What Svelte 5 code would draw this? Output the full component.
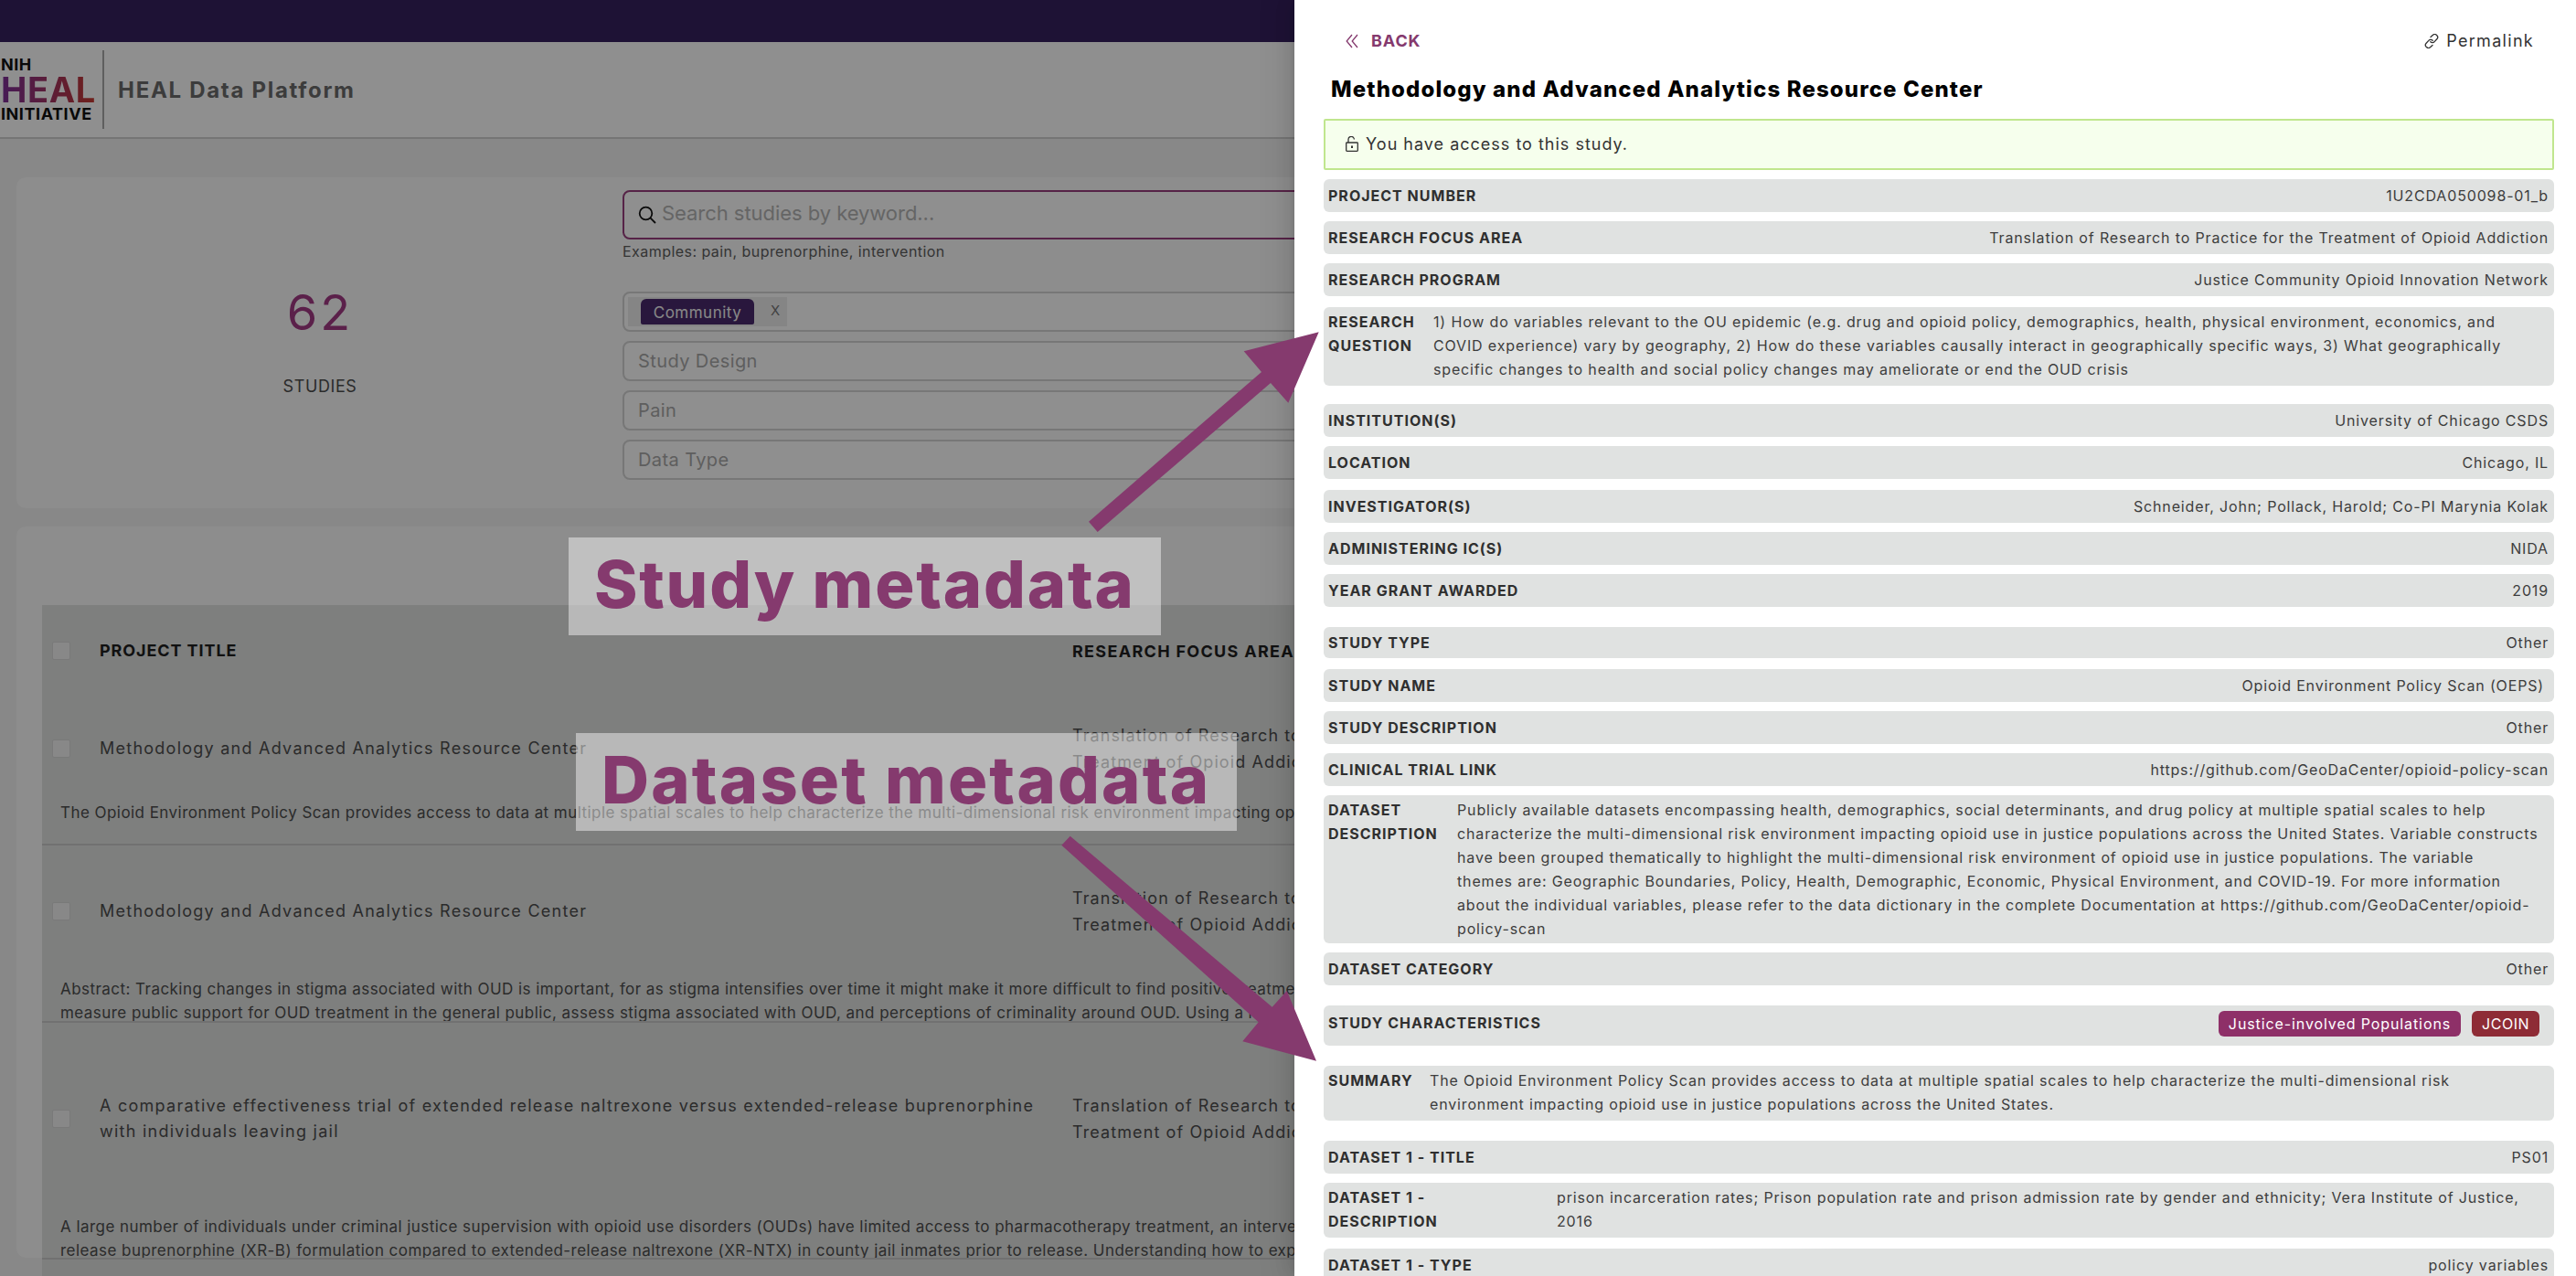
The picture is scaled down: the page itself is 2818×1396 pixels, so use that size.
<script>
  const rows = [
    { label: ['PROJECT NUMBER'], value: ['1U2CDA050098-01_b'], h: 36, gap: 10 },
    { label: ['RESEARCH FOCUS AREA'], value: ['Translation of Research to Practice for the Treatment of Opioid Addiction'], h: 36, gap: 10 },
    { label: ['RESEARCH PROGRAM'], value: ['Justice Community Opioid Innovation Network'], h: 36, gap: 10 },
    {
      label: ['RESEARCH', 'QUESTION'],
      value: [
        '1) How do variables relevant to the OU epidemic (e.g. drug and opioid policy, demographics, health, physical environment, economics, and',
        'COVID experience) vary by geography, 2) How do these variables causally interact in geographically specific ways, 3) What geographically',
        'specific changes to health and social policy changes may ameliorate or end the OUD crisis'
      ],
      h: 86, gap: 12, col: 115
    },
    { label: ['INSTITUTION(S)'], value: ['University of Chicago CSDS'], h: 36, gap: 20 },
    { label: ['LOCATION'], value: ['Chicago, IL'], h: 36, gap: 10 },
    { label: ['INVESTIGATOR(S)'], value: ['Schneider, John; Pollack, Harold; Co-PI Marynia Kolak'], h: 36, gap: 12 },
    { label: ['ADMINISTERING IC(S)'], value: ['NIDA'], h: 36, gap: 10 },
    { label: ['YEAR GRANT AWARDED'], value: ['2019'], h: 36, gap: 10 },
    { label: ['STUDY TYPE'], value: ['Other'], h: 34, gap: 22 },
    { label: ['STUDY NAME'], value: ['Opioid Environment Policy Scan (OEPS)'], h: 36, gap: 12, inset: 5 },
    { label: ['STUDY DESCRIPTION'], value: ['Other'], h: 36, gap: 10 },
    { label: ['CLINICAL TRIAL LINK'], value: ['https://github.com/GeoDaCenter/opioid-policy-scan'], h: 36, gap: 10 },
    {
      label: ['DATASET', 'DESCRIPTION'],
      value: [
        'Publicly available datasets encompassing health, demographics, social determinants, and drug policy at multiple spatial scales to help',
        'characterize the multi-dimensional risk environment impacting opioid use in justice populations across the United States. Variable constructs',
        'have been grouped thematically to highlight the multi-dimensional risk environment of opioid use in justice populations. The variable',
        'themes are: Geographic Boundaries, Policy, Health, Demographic, Economic, Physical Environment, and COVID-19. For more information',
        'about the individual variables, please refer to the data dictionary in the complete Documentation at https://github.com/GeoDaCenter/opioid-',
        'policy-scan'
      ],
      h: 162, gap: 10, col: 141
    },
    { label: ['DATASET CATEGORY'], value: ['Other'], h: 36, gap: 10 },
    { label: ['STUDY CHARACTERISTICS'], tags: true, h: 44, gap: 22 },
    {
      label: ['SUMMARY'],
      value: [
        'The Opioid Environment Policy Scan provides access to data at multiple spatial scales to help characterize the multi-dimensional risk',
        'environment impacting opioid use in justice populations across the United States.'
      ],
      h: 60, gap: 22, col: 111
    },
    { label: ['DATASET 1 - TITLE'], value: ['PS01'], h: 36, gap: 22 },
    {
      label: ['DATASET 1 -', 'DESCRIPTION'],
      value: ['prison incarceration rates; Prison population rate and prison admission rate by gender and ethnicity; Vera Institute of Justice,', '2016'],
      h: 60, gap: 10, col: 250
    },
    { label: ['DATASET 1 - TYPE'], value: ['policy variables'], h: 36, gap: 12 }
  ];

  const studies = [
    {
      title: ['Methodology and Advanced Analytics Resource Center'],
      focus: ['Translation of Research to Practice for the', 'Treatment of Opioid Addiction'],
      desc: ['The Opioid Environment Policy Scan provides access to data at multiple spatial scales to help characterize the multi-dimensional risk environment impacting opioid use in justice populations across the United States.'],
      main: 114, h: 163
    },
    {
      title: ['Methodology and Advanced Analytics Resource Center'],
      focus: ['Translation of Research to Practice for the', 'Treatment of Opioid Addiction'],
      desc: [
        'Abstract: Tracking changes in stigma associated with OUD is important, for as stigma intensifies over time it might make it more difficult to find positive treatment outcomes.',
        'measure public support for OUD treatment in the general public, assess stigma associated with OUD, and perceptions of criminality around OUD. Using a national survey'
      ],
      main: 144, h: 194
    },
    {
      title: ['A comparative effectiveness trial of extended release naltrexone versus extended-release buprenorphine', 'with individuals leaving jail'],
      focus: ['Translation of Research to Practice for the', 'Treatment of Opioid Addiction'],
      desc: [
        'A large number of individuals under criminal justice supervision with opioid use disorders (OUDs) have limited access to pharmacotherapy treatment, an intervention that',
        'release buprenorphine (XR-B) formulation compared to extended-release naltrexone (XR-NTX) in county jail inmates prior to release. Understanding how to expand access'
      ],
      main: 210, h: 259
    }
  ];

  const filters = ['Study Design', 'Pain', 'Data Type'];
</script>

<div class="page">
  <div class="topbar"></div>
  <header class="topnav">
    <div class="logo">
      <span class="logo-small">NIH</span>
      <span class="logo-heal">HEAL</span>
      <span class="logo-small">INITIATIVE</span>
    </div>
    <div class="brand">HEAL Data Platform</div>
  </header>

  <main class="content">
    <section class="card summary-card">
      <div class="counter">
        <div class="count">62</div>
        <div class="count-label">STUDIES</div>
      </div>
      <div class="search-col">
        <div class="search">
          <svg width="20" height="20" viewBox="0 0 20 20" fill="none" stroke="#151515" stroke-width="1.8">
            <circle cx="8.5" cy="8.5" r="6.8" />
            <path d="M13.4 13.4 19 19" />
          </svg>
          <span>Search studies by keyword...</span>
        </div>
        <div class="examples">Examples: pain, buprenorphine, intervention</div>
        <div class="select first">
          <span class="tag-wrap"><span class="pill">Community</span><span class="tag-x">X</span></span>
        </div>
        {#each filters as f}
          <div class="select">{f}</div>
        {/each}
      </div>
    </section>

    <section class="card table-card">
      <div class="table">
        <div class="thead">
          <span class="check"></span>
          <span class="col-title">PROJECT TITLE</span>
          <span class="col-focus">RESEARCH FOCUS AREA</span>
        </div>
        {#each studies as s}
          <div class="trow" style="height: {s.h}px">
            <div class="tmain" style="height: {s.main}px">
              <span class="check"></span>
              <div class="col-title">
                {#each s.title as line}<div>{line}</div>{/each}
              </div>
              <div class="col-focus">
                {#each s.focus as line}<div>{line}</div>{/each}
              </div>
            </div>
            <div class="tdesc">
              {#each s.desc as line}<div>{line}</div>{/each}
            </div>
          </div>
        {/each}
      </div>
    </section>
  </main>

  <div class="mask"></div>

  <aside class="drawer">
    <div class="drawer-top">
      <div class="back">
        <svg width="14" height="16" viewBox="0 0 14 16" fill="none" stroke="#853a6e" stroke-width="1.3">
          <path d="M7 1 1.2 8 7 15M13 1 7.2 8 13 15" />
        </svg>
        <span>BACK</span>
      </div>
      <div class="permalink">
        <svg width="16" height="16" viewBox="0 0 16 16" fill="none" stroke="#333" stroke-width="1.3" stroke-linecap="round">
          <path d="M7 3.6 9.2 1.6a3 3 0 0 1 4.6 4.2L11.2 8.6a3 3 0 0 1-4.4.1" />
          <path d="M9 12.4 6.8 14.4a3 3 0 0 1-4.6-4.2L4.8 7.4a3 3 0 0 1 4.4-.1" />
        </svg>
        <span>Permalink</span>
      </div>
    </div>
    <h1>Methodology and Advanced Analytics Resource Center</h1>
    <div class="alert">
      <svg width="14" height="17" viewBox="0 0 14 17" fill="none" stroke="#333" stroke-width="1.3">
        <rect x="0.7" y="7" width="12.6" height="9.3" rx="0.8" />
        <path d="M3 7V3.6a3.2 3.2 0 0 1 6.4 0" />
        <path d="M7 10.5v2.4" stroke-width="2" />
      </svg>
      <span>You have access to this study.</span>
    </div>
    {#each rows as r}
      <div
        class="row"
        class:multi={r.value && r.value.length > 1}
        class:tagged={r.tags}
        style="height: {r.h}px; margin-top: {r.gap}px"
      >
        <div class="row-label" style={r.col ? `width: ${r.col}px` : ''}>
          {#each r.label as line}<div>{line}</div>{/each}
        </div>
        {#if r.tags}
          <div class="tags">
            <span class="tag magenta">Justice-involved Populations</span>
            <span class="tag red">JCOIN</span>
          </div>
        {:else}
          <div class="row-value" style={r.inset ? `margin-right: ${r.inset}px` : ''}>
            {#each r.value as line}<div>{line}</div>{/each}
          </div>
        {/if}
      </div>
    {/each}
  </aside>

  <div class="note study-note">Study metadata</div>
  <div class="note dataset-note">Dataset metadata</div>

  <svg class="arrows" width="2818" height="1396" viewBox="0 0 2818 1396" fill="#853a6e">
    <polygon points="1191,570.7 1380,407 1360.7,384.3 1442.7,363.3 1409.3,440.7 1390,419 1200.7,582" />
    <polygon points="1170.7,914.7 1391.7,1101.7 1407.7,1084 1440,1160.7 1359.3,1139.3 1376.7,1118.3 1161.3,924.7" />
  </svg>
</div>

<style>
  :global(body) {
    margin: 0;
    font-family: Inter, "Open Sans", sans-serif;
  }

  .page {
    position: relative;
    height: 1396px;
    overflow: hidden;
    background: #f2f2f2;
    color: #4d4d4d;
  }

  .topbar {
    height: 46px;
    background: #37205f;
  }

  .topnav {
    height: 106px;
    box-sizing: border-box;
    background: #fff;
    border-bottom: 2px solid #d0d0d0;
    display: flex;
    align-items: center;
  }

  .logo {
    width: 114px;
    height: 86px;
    box-sizing: border-box;
    padding-left: 1px;
    border-right: 2px solid #aaa;
    display: flex;
    flex-direction: column;
    justify-content: center;
    font-weight: 700;
    color: #111;
  }

  .logo-small {
    font-size: 18px;
    line-height: 22px;
    letter-spacing: 0.55px;
  }

  .logo-heal {
    font-size: 38px;
    line-height: 32px;
    letter-spacing: 0.6px;
    width: fit-content;
    background: linear-gradient(90deg, #7d2f9a, #c83a30);
    -webkit-background-clip: text;
    background-clip: text;
    color: transparent;
  }

  .brand {
    margin-left: 15px;
    font-size: 24px;
    font-weight: 700;
    letter-spacing: 1.7px;
    color: #6b6b6b;
  }

  .content {
    padding: 42px 0 0 18px;
    display: flex;
    flex-direction: column;
    gap: 20px;
  }

  .card {
    background: #fbfbfb;
    border-radius: 10px;
  }

  .summary-card {
    height: 362px;
    display: flex;
    box-sizing: border-box;
    padding-top: 14px;
  }

  .counter {
    width: 664px;
    flex: none;
    text-align: center;
  }

  .count {
    margin-top: 102px;
    font-size: 54px;
    line-height: 64px;
    color: #a23a85;
    letter-spacing: 3px;
  }

  .count-label {
    margin-top: 37px;
    font-size: 18px;
    line-height: 24px;
    color: #4d4d4d;
    letter-spacing: 0.6px;
  }

  .search-col {
    width: 1600px;
    flex: none;
    margin-left: -1px;
  }

  .search {
    height: 54px;
    box-sizing: border-box;
    border: 2px solid #9a3f7f;
    border-radius: 8px;
    background: #fff;
    display: flex;
    align-items: center;
    gap: 6px;
    padding: 0 0 5px 15px;
    font-size: 22px;
    color: #b4b4b4;
    letter-spacing: -0.05px;
  }

  .search svg {
    margin-top: 5px;
  }

  .examples {
    margin-top: 3px;
    font-size: 16px;
    line-height: 20px;
    color: #5e5e5e;
    letter-spacing: 0.45px;
  }

  .select {
    height: 44px;
    margin-top: 10px;
    box-sizing: border-box;
    border: 2px solid #d4d4d4;
    border-radius: 8px;
    background: #fff;
    padding-left: 15px;
    display: flex;
    align-items: center;
    font-size: 20px;
    color: #a8a8a8;
    letter-spacing: 0.4px;
  }

  .select.first {
    margin-top: 34px;
    padding-left: 4px;
  }

  .tag-wrap {
    height: 32px;
    width: 174px;
    box-sizing: border-box;
    padding-left: 14px;
    background: #eeeeee;
    display: flex;
  }

  .pill {
    margin-top: 2px;
    height: 28px;
    width: 124px;
    box-sizing: border-box;
    text-align: center;
    border-radius: 6px 6px 2px 2px;
    background: #4a2a6e;
    color: #f2f2f2;
    font-size: 17px;
    line-height: 30px;
    letter-spacing: 0.5px;
  }

  .tag-x {
    margin-left: 18px;
    color: #777;
    font-size: 15px;
    line-height: 30px;
    letter-spacing: 0;
  }

  .table-card {
    height: 800px;
    padding: 86px 0 0 28px;
    box-sizing: border-box;
  }

  .table {
    height: 800px;
    background: #e0e2e1;
    font-size: 18px;
    white-space: nowrap;
  }

  .thead {
    height: 100px;
    display: flex;
    align-items: center;
    font-weight: 700;
    color: #1f1f1f;
    letter-spacing: 0.9px;
  }

  .check {
    width: 20px;
    height: 20px;
    flex: none;
    margin-left: 11px;
    box-sizing: border-box;
    background: #f2f2f2;
    border: 1px solid #d8d8d8;
    border-radius: 2px;
  }

  .col-title {
    margin-left: 32px;
    width: 1064px;
    flex: none;
    line-height: 28px;
  }

  .col-focus {
    line-height: 29px;
    letter-spacing: 1.1px;
  }

  .thead .col-focus {
    letter-spacing: 1.3px;
  }

  .trow {
    box-sizing: border-box;
    border-bottom: 2px solid #c9c9c9;
    overflow: hidden;
  }

  .tmain {
    display: flex;
    align-items: center;
    letter-spacing: 1.25px;
  }

  .tdesc {
    padding-left: 20px;
    font-size: 17px;
    line-height: 26px;
    letter-spacing: 0.45px;
  }

  .mask {
    position: absolute;
    inset: 0;
    background: rgba(0, 0, 0, 0.44);
  }

  .drawer {
    position: absolute;
    top: 0;
    left: 1416px;
    right: 0;
    height: 1396px;
    box-sizing: border-box;
    padding: 0 24px 0 32px;
    background: #fff;
    overflow: hidden;
    color: #333;
    box-shadow: -6px 0 16px 0 rgba(0, 0, 0, 0.08), -3px 0 6px -4px rgba(0, 0, 0, 0.12), -9px 0 28px 8px rgba(0, 0, 0, 0.05);
  }

  .drawer-top {
    height: 90px;
    padding: 35px 22px 0 24px;
    box-sizing: border-box;
    display: flex;
    justify-content: space-between;
    align-items: flex-start;
    font-size: 18px;
    line-height: 20px;
  }

  .back {
    display: flex;
    align-items: center;
    gap: 14px;
    color: #853a6e;
    font-weight: 700;
    letter-spacing: 0.9px;
  }

  .permalink {
    display: flex;
    align-items: center;
    gap: 8px;
    letter-spacing: 1.3px;
  }

  h1 {
    margin: -8px 0 0 8px;
    height: 48px;
    font-size: 24px;
    line-height: 32px;
    font-weight: 800;
    color: #000;
    letter-spacing: 1.12px;
  }

  .alert {
    height: 56px;
    box-sizing: border-box;
    border: 2px solid #c0e68e;
    border-radius: 2px;
    background: #f6ffed;
    display: flex;
    align-items: center;
    gap: 8px;
    padding: 0 0 2px 22px;
    font-size: 18px;
    letter-spacing: 1px;
  }

  .row {
    box-sizing: border-box;
    background: #e0e2e1;
    border-radius: 6px;
    padding: 0 6px 0 5px;
    display: flex;
    justify-content: space-between;
    align-items: center;
    font-size: 16px;
    line-height: 26px;
    white-space: nowrap;
    overflow: hidden;
  }

  .row.multi {
    align-items: flex-start;
    padding-top: 3px;
    justify-content: flex-start;
  }

  .row.tagged {
    align-items: flex-start;
    padding-top: 6px;
  }

  .row-label {
    font-weight: 700;
    color: #2f2f2f;
    letter-spacing: 1px;
    flex: none;
  }

  .row-value {
    color: #3d3d3d;
    letter-spacing: 0.85px;
  }

  .tags {
    display: flex;
    gap: 12px;
    margin-right: 10px;
  }

  .tag {
    height: 28px;
    line-height: 28px;
    padding: 0 11px;
    border-radius: 6px;
    color: #fff;
    letter-spacing: 0.9px;
  }

  .red {
    background: #8e2c36;
    letter-spacing: 0.5px;
  }

  .magenta {
    background: #8e3068;
  }

  .note {
    position: absolute;
    height: 107px;
    box-sizing: border-box;
    background: rgba(255, 255, 255, 0.45);
    color: #853a6e;
    font-weight: 800;
    font-size: 72px;
    line-height: 101px;
    white-space: nowrap;
  }

  .study-note {
    left: 622px;
    top: 588px;
    width: 648px;
    padding-left: 28px;
    letter-spacing: 1.8px;
  }

  .dataset-note {
    left: 630px;
    top: 802px;
    width: 723px;
    padding-left: 28px;
    letter-spacing: 2.2px;
  }

  .arrows {
    position: absolute;
    top: 0;
    left: 0;
  }
</style>
